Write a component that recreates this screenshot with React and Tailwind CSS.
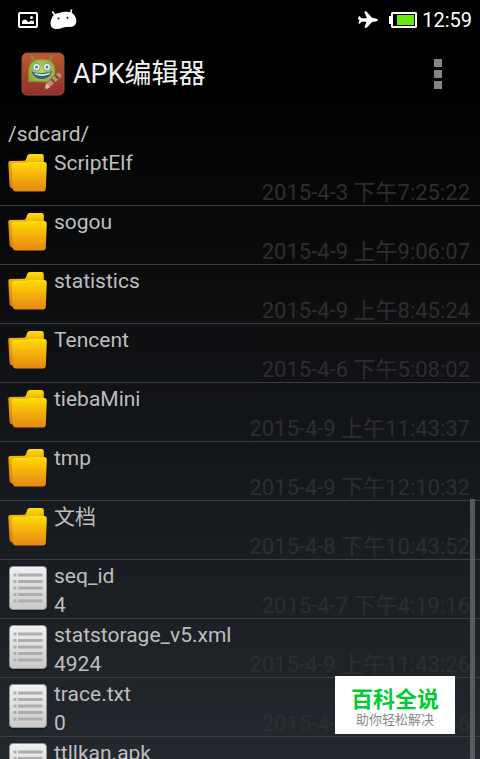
import React from "react";

const files = [
  { name: "ScriptElf", date: "2015-4-3 下午7:25:22", folder: true },
  { name: "sogou", date: "2015-4-9 上午9:06:07", folder: true },
  { name: "statistics", date: "2015-4-9 上午8:45:24", folder: true },
  { name: "Tencent", date: "2015-4-6 下午5:08:02", folder: true },
  { name: "tiebaMini", date: "2015-4-9 上午11:43:37", folder: true },
  { name: "tmp", date: "2015-4-9 下午12:10:32", folder: true },
  { name: "文档", date: "2015-4-8 下午10:43:52", folder: true },
  { name: "seq_id", size: "4", date: "2015-4-7 下午4:19:16" },
  { name: "statstorage_v5.xml", size: "4924", date: "2015-4-9 上午11:43:26" },
  { name: "trace.txt", size: "0", date: "2015-4-9 上午8:45:56" },
  { name: "ttllkan.apk", size: "", date: "" },
];

const FolderIcon = () => (
  <svg width="40" height="40" viewBox="0 0 40 40" aria-hidden="true">
    <path d="M0.300 9 Q0.300 7 2.300 7 L16.500 6.800 Q17.800 6.500 18.300 4.500 L19.300 1.500 Q20 0 21.800 0 H33.500 Q35.800 0 35.800 2.200 V12 L30 36 H6 Q5 34.500 2.500 33.800 Q1.500 33 1.500 31 Z" fill="url(#folderBack)" />
    <path d="M3.500 12 Q3.300 9 6.300 9 H17 Q19 8.800 20 8 H36 Q39 8 38.800 11 L37.800 35 Q37.600 37.500 35 37.500 H7.500 Q5 37.300 4.800 34.500 Z" fill="url(#folderFront)" />
    <path d="M5 10.800 Q5.500 9.800 7 9.800 H18 L20.500 8.800 H36 Q37.500 9 37.800 10" fill="none" stroke="#ffea30" strokeWidth="1" opacity="0.6" />
  </svg>
);

const FileIcon = () => (
  <svg width="40" height="46" viewBox="0 0 40 46" aria-hidden="true">
    <rect x="1" y="1.500" width="38" height="44" rx="4" fill="#0b0d0f" opacity="0.5" />
    <rect x="1.500" y="0.500" width="37" height="43" rx="3.500" fill="url(#paper)" stroke="#909192" />
    {[8, 14.5, 21, 27.5, 34].map((y) => (
      <g key={y} fill="#adadad">
        <rect x="5.500" y={y - 0.5} width="3" height="3" />
        <rect x="10" y={y - 0.5} width="24.500" height="3" />
      </g>
    ))}
  </svg>
);

const Gradients = () => (
  <svg className="absolute size-0" aria-hidden="true">
    <defs>
      <linearGradient id="folderBack" x1="0" y1="0" x2="0" y2="1">
        <stop offset="0" stopColor="#ffe000" />
        <stop offset="0.3" stopColor="#eaa80a" />
        <stop offset="1" stopColor="#d9760f" />
      </linearGradient>
      <linearGradient id="folderFront" x1="0" y1="0" x2="0" y2="1">
        <stop offset="0" stopColor="#ffdc00" />
        <stop offset="0.4" stopColor="#f5b80c" />
        <stop offset="1" stopColor="#e78612" />
      </linearGradient>
      <linearGradient id="paper" x1="0" y1="0" x2="0" y2="1">
        <stop offset="0" stopColor="#f2f2f2" />
        <stop offset="1" stopColor="#c9c9c9" />
      </linearGradient>
      <linearGradient id="appTile" x1="0" y1="0" x2="0" y2="1">
        <stop offset="0" stopColor="#bd5a31" />
        <stop offset="1" stopColor="#922e2d" />
      </linearGradient>
      <radialGradient id="robot" cx="0.5" cy="0.5" r="0.6">
        <stop offset="0" stopColor="#d6d44c" />
        <stop offset="1" stopColor="#8ba736" />
      </radialGradient>
    </defs>
  </svg>
);

const AppIcon = () => (
  <svg width="44" height="44" viewBox="0 0 44 44" aria-hidden="true">
    <rect x="1" y="1" width="42" height="42" rx="5" fill="url(#appTile)" stroke="#96513b" />
    <path d="M13.500 9.500 L11 4.500 M28 9.500 L30.500 4.500" stroke="#7f9233" strokeWidth="2.400" strokeLinecap="round" />
    <path d="M7.500 29.500 V19 Q8 7 20.800 7 Q33.500 7 34 18 V23 L27 30 Z" fill="url(#robot)" stroke="#7f8f32" strokeWidth="0.700" />
    <g>
      <circle cx="15.500" cy="15" r="4" fill="#7aa9a8" />
      <circle cx="26" cy="15" r="4" fill="#7aa9a8" />
      <circle cx="15.500" cy="15" r="3" fill="#f0f6f5" />
      <circle cx="26" cy="15" r="3" fill="#f0f6f5" />
      <circle cx="15.500" cy="15" r="1.500" fill="#4a7cb0" />
      <circle cx="26" cy="15" r="1.500" fill="#4a7cb0" />
    </g>
    <path d="M10.500 19.500 Q20.500 23 31 19 Q29 27 20.800 27 Q13 27 10.500 19.500 Z" fill="#2a5f86" />
    <path d="M13 20.800 Q21 24 29.500 20.300 L28.500 22.300 Q21 25.500 14 22.500 Z" fill="#d9e7e4" />
    <path d="M23 38.500 L25.500 31 L36 21 Q39 19.500 40.500 22.500 Q41 24.500 39 26.500 L28.500 35.500 Z" fill="#bd8f69" stroke="#744938" strokeWidth="0.600" />
    <path d="M23 38.500 L25.500 31 L29 35.200 Z" fill="#e1b69a" />
    <path d="M30 26.800 L34 31 M34 23 L38 27" stroke="#704536" strokeWidth="1.800" />
    <path d="M23 38.500 L24 35.500 L25.500 37.300 Z" fill="#59372f" />
  </svg>
);

const StatusBar = () => (
  <div className="flex h-10 shrink-0 items-center justify-between pr-2 pl-4">
    <div className="flex items-center gap-3">
      <svg width="22" height="18" viewBox="0 0 22 18" aria-hidden="true">
        <rect x="3" y="2" width="18" height="14" rx="1" fill="none" stroke="#fff" strokeWidth="2" />
        <path d="M6 13 V10.500 Q7 8.500 9 8.500 Q10.500 8.500 11.500 10.500 Q13 11.500 14 10 Q16 9 18 10.500 V13 Z" fill="#fff" />
        <circle cx="15.500" cy="6.500" r="1.500" fill="#fff" />
      </svg>
      <svg width="27" height="22" viewBox="0 0 27 22" aria-hidden="true">
        <path d="M2.800 3 L5 6.500 M21.500 1 L20.500 5" stroke="#fff" strokeWidth="1.600" strokeLinecap="round" />
        <path d="M1.500 10 Q3 4.500 9 4 Q14 2.300 19 3 Q24 3.500 26 9.500 Q27 14 24.500 16.500 Q22 18.500 17.500 18 Q14.500 17.800 12.500 18.800 Q9 20.500 5 20 Q0.800 19 0.500 14.500 Q0.500 12 1.500 10 Z" fill="#fff" />
        <circle cx="8.500" cy="9.500" r="1" fill="#111" />
        <circle cx="17.500" cy="8.800" r="1" fill="#111" />
      </svg>
    </div>
    <div className="flex items-center text-white">
      <svg width="20" height="18" viewBox="0 0 20 18" aria-hidden="true">
        <path d="M0 8 L0.500 6 L1.500 5 L3.500 7.300 H9 L6.500 1.500 Q6 0 7.500 0.200 L8.500 0.500 L14 6.800 L18 7.500 Q20 8.300 20 9 Q20 9.700 18 10.500 L14 11 L9 16.500 L7 17 L6.500 16 L8.500 10.700 H3.500 L1.500 13 L0.500 12 L1.500 9 Z" fill="#fff" />
      </svg>
      <svg className="ml-[11px]" width="28" height="16" viewBox="0 0 28 16" aria-hidden="true">
        <path d="M0 4 H2 V1 L3 0 H27 L28 1 V15 L27 16 H3 L2 15 V12 H0 Z" fill="#fff" />
        <rect x="4" y="2" width="22" height="12" fill="#000" />
        <rect x="8" y="3" width="17" height="10" fill="#6be613" />
      </svg>
      <span className="ml-[5px] text-xl">12:59</span>
    </div>
  </div>
);

const App = () => {
  return (
    <div className="relative flex h-screen flex-col overflow-hidden bg-linear-to-b/srgb from-black from-10% to-[#24292f] font-['Roboto','Noto_Sans_CJK_SC',sans-serif] text-[#bebebe]">
      <Gradients />
      <StatusBar />
      <header className="flex h-17 shrink-0 items-center pr-8 pl-[21px]">
        <AppIcon />
        <h1 className="ml-2 grow text-[27px] text-[#f3f3f3]">APK编辑器</h1>
        <button type="button" aria-label="菜单" className="flex flex-col gap-[3px] px-1.5">
          <span className="size-2 bg-[#858585]" />
          <span className="size-2 bg-[#858585]" />
          <span className="size-2 bg-[#858585]" />
        </button>
      </header>
      <main className="min-h-0 grow overflow-hidden pt-3">
        <p className="px-2 pt-px text-[21px] leading-[26px]">/sdcard/</p>
        <ul>
          {files.map((file) => (
            <li key={file.name} className="flex h-[59px] border-b border-[#3c3f41] pr-2.5 pl-2 text-[21px] leading-[29px]">
              <div className={file.folder ? "shrink-0 pt-[7px]" : "shrink-0 pt-1.5"}>
                {file.folder ? <FolderIcon /> : <FileIcon />}
              </div>
              <div className="grow pt-0.5 pl-1.5">
                <p className="whitespace-nowrap">{file.name}</p>
                <div className="flex justify-between">
                  <span>{file.size}</span>
                  <time className="text-[22px] text-[#2e2e2e]">{file.date}</time>
                </div>
              </div>
            </li>
          ))}
        </ul>
      </main>
      <div className="absolute right-[5px] bottom-0 h-[260px] w-[5px] bg-[#68686a]/80" />
      <div className="absolute right-[25px] bottom-[25px] flex h-[58px] w-[120px] flex-col items-center justify-center bg-white pt-1.5">
        <strong className="text-[22px] leading-6 font-bold text-[#0c3]">百科全说</strong>
        <span className="text-[13px] leading-4 text-[#888]">助你轻松解决</span>
      </div>
    </div>
  );
};

export default App;
